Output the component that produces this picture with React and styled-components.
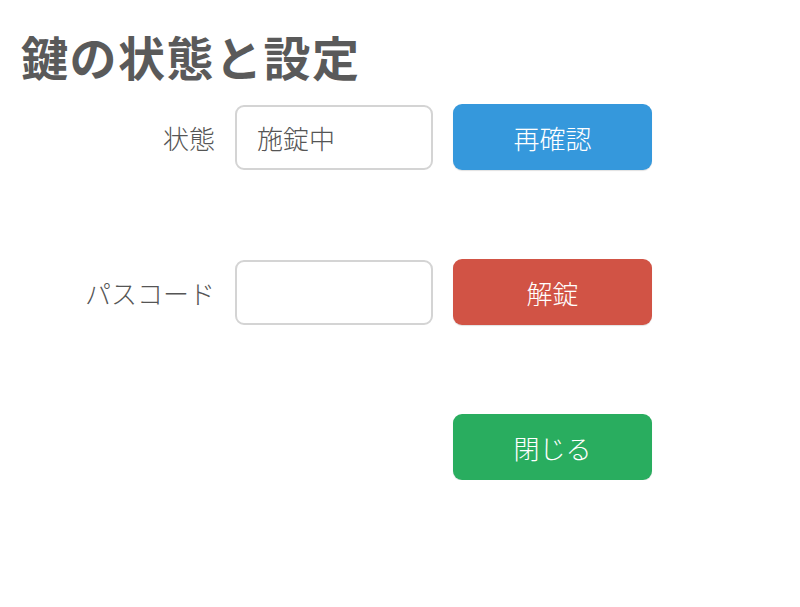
import React from 'react'
import styled, { createGlobalStyle } from 'styled-components'

const GlobalStyle = createGlobalStyle`
    body {
        margin: 0;
        background: #ffffff;
        font-family: "Noto Sans CJK JP", "Noto Sans", sans-serif;
    }
`;

const Page = styled.main`
    padding: 25px 0 0 21px;
`;

const Title = styled.h1`
    margin: 0 0 17px;
    font-size: 47px;
    line-height: 62px;
    font-weight: 700;
    color: #5a5a5a;
    letter-spacing: 1.5px;
`;

const Form = styled.div`
    display: grid;
    grid-template-columns: 194px 198px 199px;
    column-gap: 20px;
    row-gap: 89px;
    align-items: center;
`;

const Label = styled.label`
    text-align: right;
    font-size: 26px;
    font-weight: 300;
    color: #555555;
`;

const Field = styled.div`
    box-sizing: border-box;
    height: 65px;
    border: 2px solid #d4d4d4;
    border-radius: 9px;
    padding: 0 20px;
    display: flex;
    align-items: center;
    font-size: 26px;
    font-weight: 300;
    color: #555555;
`;

const Button = styled.button`
    box-sizing: border-box;
    height: 66px;
    border: none;
    border-radius: 9px;
    background: ${({ color }) => color};
    color: #ffffff;
    font-family: inherit;
    font-size: 26px;
    font-weight: 300;
    box-shadow: 0 1px 1px rgba(0, 0, 0, 0.12);
`;

const Spacer = styled.div``;

export default function App() {
    return (
        <Page>
            <GlobalStyle />
            <Title>鍵の状態と設定</Title>
            <Form>
                <Label>状態</Label>
                <Field>施錠中</Field>
                <Button color="#3598dc">再確認</Button>

                <Label>パスコード</Label>
                <Field />
                <Button color="#d15345">解錠</Button>

                <Spacer />
                <Spacer />
                <Button color="#29ad5f">閉じる</Button>
            </Form>
        </Page>
    )
}
